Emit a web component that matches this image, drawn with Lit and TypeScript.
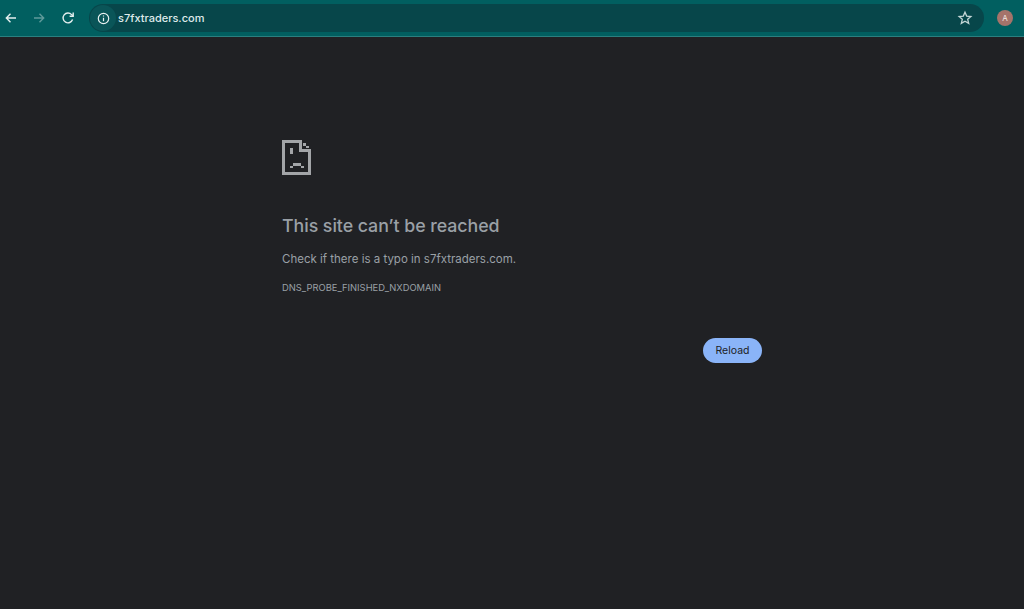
import { LitElement, html, css } from "lit";
import { customElement } from "lit/decorators.js";

@customElement("app-root")
export class AppRoot extends LitElement {
  static styles = css`
    :host { display: block; width: 1024px; height: 609px; background: #202124; overflow: hidden; font-family: Inter, "Liberation Sans", sans-serif; }
    .bar { height: 36px; background: #015f60; border-bottom: 1px solid #2a7f7f; display: flex; align-items: center; box-sizing: content-box; }
    .nav { width: 16px; height: 16px; display: block; flex: none; }
    .back { margin-left: 3px; }
    .fwd { margin-left: 12px; }
    .rel { margin-left: 13px; }
    .omni { margin-left: 13px; width: 895px; height: 28px; border-radius: 14px; background: #07464a; display: flex; align-items: center; color: #dfeaea; font-size: 11px; font-weight: 500; }
    .info { width: 26px; height: 26px; margin-left: 1px; border-radius: 50%; background: #0a5558; display: flex; align-items: center; justify-content: center; }
    .url { margin-left: 2px; flex: 1; letter-spacing: 0; }
    .star { margin-right: 11px; }
    .avatar { margin-left: 13px; width: 16px; height: 16px; border-radius: 50%; background: #a5736a; color: #f3e8e5; font-size: 8px; display: flex; align-items: center; justify-content: center; }
    .main { width: 480px; margin-left: 282px; padding-top: 103px; display: flex; flex-direction: column; }
    .sad { display: block; width: 29px; height: 35px; }
    h1 { margin: 39px 0 0; font-size: 17.8px; line-height: 24px; font-weight: 500; color: #9aa0a6; letter-spacing: -0.05px; white-space: nowrap; }
    .msg { margin: 13px 0 0; font-size: 11.5px; line-height: 16px; color: #9aa0a6; white-space: nowrap; }
    .code { margin: 15px 0 0; font-size: 9.4px; line-height: 12px; color: #9aa0a6; white-space: nowrap; }
    .actions { display: flex; justify-content: flex-end; margin-top: 44px; }
    button { width: 59px; height: 25px; border: 0; padding: 0; border-radius: 13px; background: #8ab4f8; color: #202124; font: 400 10.5px Inter, "Liberation Sans", sans-serif; }
  `;

  render() {
    return html`
      <div class="bar">
        <svg class="nav back" viewBox="0 0 16 16" fill="none" stroke="#e3eeee" stroke-width="1.4"><path d="M13 8H3.5M7.5 3.8 3.3 8l4.2 4.2"/></svg>
        <svg class="nav fwd" viewBox="0 0 16 16" fill="none" stroke="#5f9a9a" stroke-width="1.4"><path d="M3 8h9.5M8.5 3.8 12.7 8l-4.2 4.2"/></svg>
        <svg class="nav rel" viewBox="0 0 16 16" fill="none" stroke="#e3eeee" stroke-width="1.4"><path d="M12.6 9.6A4.9 4.9 0 1 1 11.6 4.6L13 6"/><path d="M13.2 2.6V6.2H9.6" /></svg>
        <div class="omni">
          <div class="info"><svg width="13" height="13" viewBox="0 0 13 13" fill="none" stroke="#e8f0f0" stroke-width="1.2"><circle cx="6.5" cy="6.5" r="5.2"/><path d="M6.5 5.7v3.6M6.5 3.4v1.2"/></svg></div>
          <span class="url">s7fxtraders.com</span>
          <svg class="nav star" viewBox="0 0 16 16" fill="none" stroke="#c4d6d6" stroke-width="1.3"><path d="M8 2.2l1.7 3.9 4.2.4-3.2 2.8 1 4.1L8 11.2l-3.7 2.2 1-4.1-3.2-2.8 4.2-.4z"/></svg>
        </div>
        <div class="avatar">A</div>
      </div>
      <div class="main">
        <svg class="sad" viewBox="0 0 29 35" fill="#a3a5a8" shape-rendering="crispEdges">
          <path d="M0 0h3v35H0zM0 0h20v3H0zM0 32h29v3H0zM26 9h3v26h-3zM17 0h3v12h-3zM17 9h12v3H17zM21 3h3v3h-3zM24 6h3v2h-3z"/>
          <path d="M8 8h3v6H8zM11 23h8v2.500h-8zM8 25.500h3v2.500H8zM19 25.500h3v2.500h-3z"/>
        </svg>
        <h1>This site can’t be reached</h1>
        <p class="msg">Check if there is a typo in s7fxtraders.com.</p>
        <p class="code">DNS_PROBE_FINISHED_NXDOMAIN</p>
        <div class="actions"><button>Reload</button></div>
      </div>
    `;
  }
}
